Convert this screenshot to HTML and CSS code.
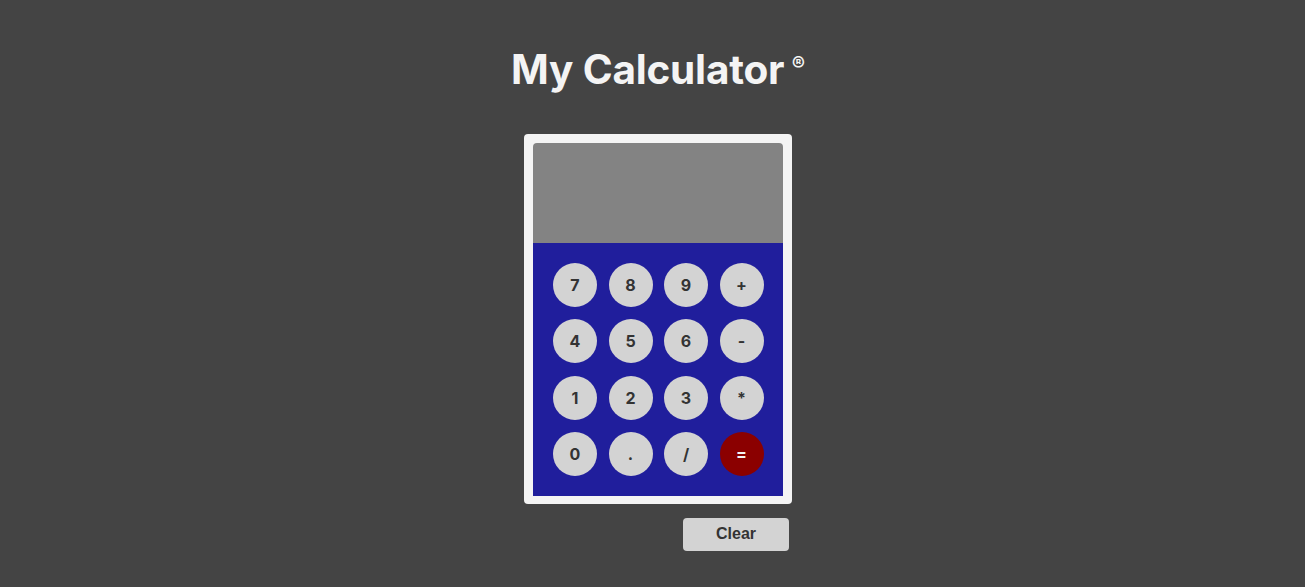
FILE: index.html
```html
<!DOCTYPE html>
<html lang="en">
<head>
<meta charset="utf-8">
<title>My Calculator</title>
<link rel="stylesheet" href="styles.css">
</head>
<body>
<main class="page">
  <h1 class="title">My Calculator <sup class="reg">®</sup></h1>
  <div class="calc">
    <div class="display"></div>
    <div class="keypad">
      <button class="key">7</button>
      <button class="key">8</button>
      <button class="key">9</button>
      <button class="key">+</button>
      <button class="key">4</button>
      <button class="key">5</button>
      <button class="key">6</button>
      <button class="key">-</button>
      <button class="key">1</button>
      <button class="key">2</button>
      <button class="key">3</button>
      <button class="key">*</button>
      <button class="key">0</button>
      <button class="key">.</button>
      <button class="key">/</button>
      <button class="key key-eq">=</button>
    </div>
  </div>
  <div class="actions">
    <button class="clear">Clear</button>
  </div>
</main>
</body>
</html>
```
FILE: styles.css
```css
html, body {
  margin: 0;
  padding: 0;
  background: #444444;
}
body {
  font-family: Inter, "Liberation Sans", sans-serif;
}
.page {
  display: flex;
  flex-direction: column;
  align-items: center;
  padding-top: 45px;
  padding-left: 11px;
}
.title {
  margin: 0;
  color: #f4f4f4;
  font-size: 40.5px;
  font-weight: 700;
  line-height: 50px;
  letter-spacing: -0.2px;
}
.reg {
  font-size: 20px;
  vertical-align: top;
  position: relative;
  top: -6px;
  margin-left: -2px;
}
.calc {
  margin-top: 39px;
  width: 250px;
  padding: 9px 9px 8px 9px;
  background: #f4f4f4;
  border-radius: 4px;
}
.display {
  height: 100px;
  background: #838383;
  border-radius: 4px 4px 0 0;
}
.keypad {
  background: #201e9c;
  display: grid;
  grid-template-columns: repeat(4, 44px);
  column-gap: 11.5px;
  row-gap: 12.3px;
  padding: 20px;
  justify-content: start;
}
.key {
  width: 44px;
  height: 44px;
  border: none;
  border-radius: 50%;
  background: #d3d3d3;
  color: #333333;
  font-family: Inter, "Liberation Sans", sans-serif;
  font-weight: 700;
  font-size: 16px;
  padding: 0;
}
.key-eq {
  background: #8b0000;
  color: #f4f4f4;
}
.actions {
  width: 268px;
  display: flex;
  justify-content: flex-end;
  margin-top: 14px;
}
.clear {
  width: 106px;
  height: 33px;
  margin-right: 3px;
  border: none;
  border-radius: 4px;
  background: #d3d3d3;
  color: #333333;
  font-family: "Liberation Sans", Arial, sans-serif;
  font-weight: 700;
  font-size: 16px;
}
```
